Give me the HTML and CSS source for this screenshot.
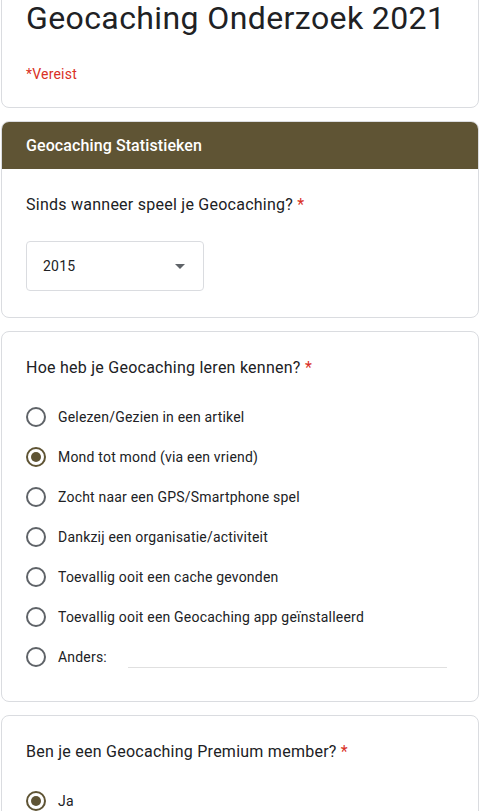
FILE: index.html
```html
<!DOCTYPE html>
<html lang="nl">
<head>
<meta charset="utf-8">
<title>Geocaching Onderzoek 2021</title>
<link rel="stylesheet" href="styles.css">
</head>
<body>
<div class="page">
  <div class="card head-card">
    <h1 class="title">Geocaching Onderzoek 2021</h1>
    <div class="req">*Vereist</div>
  </div>

  <div class="card section-card">
    <div class="band">Geocaching Statistieken</div>
    <div class="section-body">
      <div class="q">Sinds wanneer speel je Geocaching? <span class="ast">*</span></div>
      <div class="select">
        <span class="select-val">2015</span>
        <span class="arrow"></span>
      </div>
    </div>
  </div>

  <div class="card q-card">
    <div class="q">Hoe heb je Geocaching leren kennen? <span class="ast">*</span></div>
    <div class="options">
      <div class="opt"><span class="radio"></span><span class="opt-label">Gelezen/Gezien in een artikel</span></div>
      <div class="opt"><span class="radio checked"></span><span class="opt-label">Mond tot mond (via een vriend)</span></div>
      <div class="opt"><span class="radio"></span><span class="opt-label">Zocht naar een GPS/Smartphone spel</span></div>
      <div class="opt"><span class="radio"></span><span class="opt-label">Dankzij een organisatie/activiteit</span></div>
      <div class="opt"><span class="radio"></span><span class="opt-label">Toevallig ooit een cache gevonden</span></div>
      <div class="opt"><span class="radio"></span><span class="opt-label">Toevallig ooit een Geocaching app geïnstalleerd</span></div>
      <div class="opt"><span class="radio"></span><span class="opt-label">Anders:</span><span class="other-line"></span></div>
    </div>
  </div>

  <div class="card q-card">
    <div class="q">Ben je een Geocaching Premium member? <span class="ast">*</span></div>
    <div class="options">
      <div class="opt"><span class="radio checked"></span><span class="opt-label">Ja</span></div>
      <div class="opt"><span class="radio"></span><span class="opt-label">Nee</span></div>
    </div>
  </div>
</div>
</body>
</html>
```

FILE: styles.css
```css
html, body {
  margin: 0;
  padding: 0;
  background: #ffffff;
}

body {
  font-family: Roboto, "Liberation Sans", Arial, sans-serif;
  color: #202124;
  overflow: hidden;
}

.page {
  padding: 0 2px 0 1px;
  display: flex;
  flex-direction: column;
  gap: 13px;
}

.card {
  background: #fff;
  border: 1px solid #dadce0;
  border-radius: 8px;
  box-sizing: border-box;
  width: 478px;
}

.head-card {
  margin-top: -28px;
  padding: 25px 24px 23px 24px;
}

.title {
  margin: 0;
  font-family: Roboto, "Liberation Sans", Arial, sans-serif;
  font-weight: 400;
  font-size: 32px;
  line-height: 40px;
  letter-spacing: 0.4px;
  color: #202124;
}

.req {
  margin-top: 26px;
  font-size: 14px;
  line-height: 20px;
  color: #d93025;
  letter-spacing: 0.2px;
}

.section-card {
  overflow: hidden;
}

.band {
  margin: -1px -1px 0 -1px;
  height: 48px;
  background: #5f5434;
  color: #fff;
  border-radius: 8px 8px 0 0;
  display: flex;
  align-items: center;
  padding-left: 25px;
  font-size: 16px;
  font-weight: 500;
  letter-spacing: 0.1px;
}

.section-body {
  padding: 24px 24px 26px 24px;
}

.q {
  font-size: 16px;
  line-height: 24px;
  letter-spacing: 0.25px;
  color: #202124;
}

.ast {
  color: #d93025;
}

.select {
  margin-top: 24px;
  width: 178px;
  height: 50px;
  box-sizing: border-box;
  border: 1px solid #dadce0;
  border-radius: 4px;
  display: flex;
  align-items: center;
  justify-content: space-between;
  padding: 0 18px 0 16px;
}

.select-val {
  font-size: 14px;
  letter-spacing: 0.2px;
}

.arrow {
  width: 0;
  height: 0;
  border-left: 5px solid transparent;
  border-right: 5px solid transparent;
  border-top: 5px solid #5f6368;
}

.q-card {
  padding: 24px;
}

.options {
  margin-top: 17px;
  display: flex;
  flex-direction: column;
}

.opt {
  height: 40px;
  display: flex;
  align-items: center;
  gap: 12px;
}

.radio {
  width: 20px;
  height: 20px;
  box-sizing: border-box;
  border: 2px solid #5f6368;
  border-radius: 50%;
  flex: none;
  display: flex;
  align-items: center;
  justify-content: center;
}

.radio.checked {
  border-color: #5f5434;
}

.radio.checked::after {
  content: "";
  width: 10px;
  height: 10px;
  border-radius: 50%;
  background: #5f5434;
}

.opt-label {
  font-size: 14px;
  line-height: 20px;
  letter-spacing: 0.2px;
  color: #202124;
}

.other-line {
  flex: 1;
  height: 1px;
  background: #e0e0e0;
  margin: 20px 7px 0 9px;
}
```
